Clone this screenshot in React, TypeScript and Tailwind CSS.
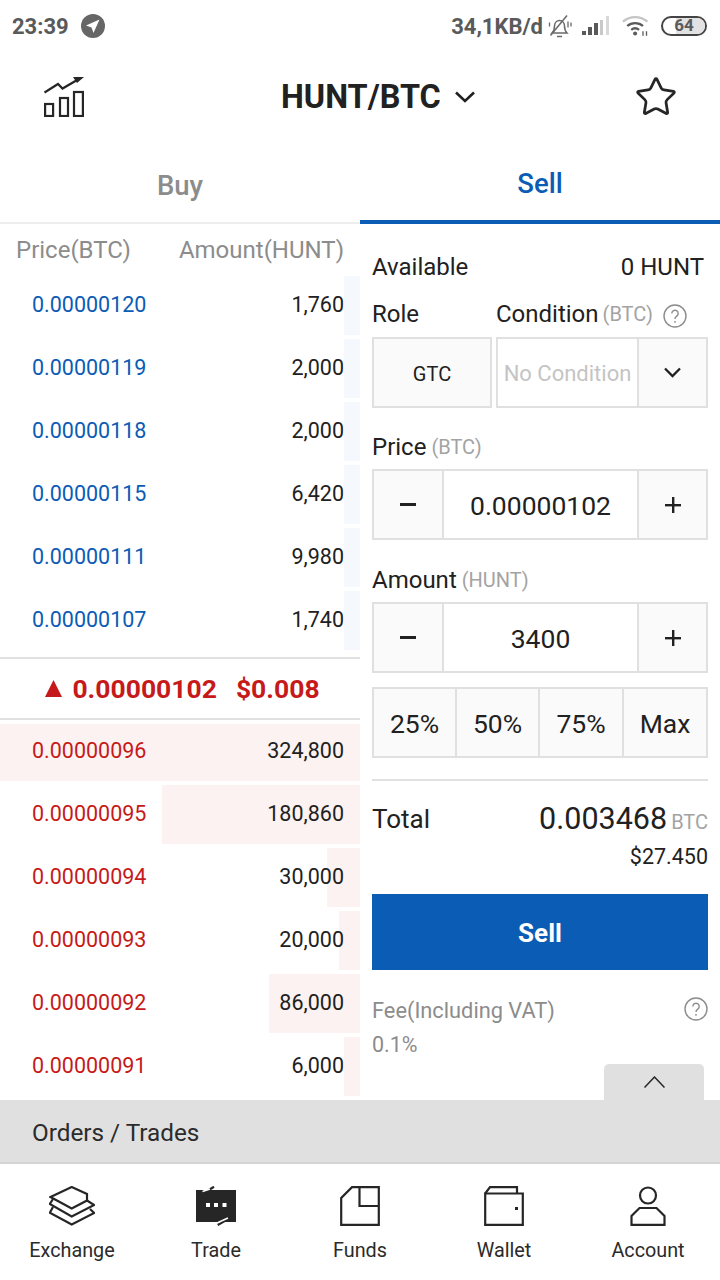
import * as React from "react";
import { Star } from "lucide-react";

const asks = [
  { price: "0.00000120", amount: "1,760", bar: 16 },
  { price: "0.00000119", amount: "2,000", bar: 16 },
  { price: "0.00000118", amount: "2,000", bar: 16 },
  { price: "0.00000115", amount: "6,420", bar: 16 },
  { price: "0.00000111", amount: "9,980", bar: 16 },
  { price: "0.00000107", amount: "1,740", bar: 16 },
];

const bids = [
  { price: "0.00000096", amount: "324,800", bar: 360 },
  { price: "0.00000095", amount: "180,860", bar: 198 },
  { price: "0.00000094", amount: "30,000", bar: 33 },
  { price: "0.00000093", amount: "20,000", bar: 21 },
  { price: "0.00000092", amount: "86,000", bar: 91 },
  { price: "0.00000091", amount: "6,000", bar: 16 },
];

const HelpIcon = () => (
  <svg width="24" height="24" viewBox="0 0 24 24" fill="none" stroke="#8c8c8c" strokeWidth="1.4">
    <circle cx="12" cy="12" r="11" />
    <path d="M8.8 9.4a3.2 3.2 0 1 1 5 2.7c-1.2.8-1.8 1.4-1.8 2.9" />
    <path d="M12 17v1.8" />
  </svg>
);

const BookRow = ({ price, amount, bar, color, tint, first }: { price: string; amount: string; bar: number; color: string; tint: string; first?: boolean }) => (
  <div className={`relative flex h-[59px] items-center justify-between pl-8 pr-4 ${first ? "mt-[2px]" : "mt-1"}`}>
    <div className={`absolute right-0 ${first ? "top-[2px] h-[57px]" : "top-0 h-full"} ${tint}`} style={{ width: bar }} />
    <span className={`relative text-[21.5px] ${color}`}>{price}</span>
    <span className="relative text-[21.5px] text-[#212121]">{amount}</span>
  </div>
);

const Stepper = ({ value }: { value: string }) => (
  <div className="flex h-[71px] border-2 border-[#e0e0e0] text-[26.5px] text-[#212121]">
    <div className="flex w-[68px] items-center justify-center bg-[#fafafa]">
      <div className="h-[2.5px] w-[16px] bg-[#212121]" />
    </div>
    <div className="flex flex-1 items-center justify-center border-x-2 border-[#e0e0e0] pt-[2px]">{value}</div>
    <div className="flex w-[67px] items-center justify-center bg-[#fafafa]">
      <svg width="18" height="18" viewBox="0 0 18 18" fill="#212121">
        <path d="M8 1h2.4v16H8z" />
        <path d="M1 8h16v2.4H1z" />
      </svg>
    </div>
  </div>
);

const NavItem = ({ label, children }: { label: string; children: React.ReactNode }) => (
  <div className="flex w-[144px] flex-col items-center">
    <div className="flex h-[44px] items-center justify-center">{children}</div>
    <span className="mt-[9px] text-[19.8px] leading-[28px] text-[#2b2b2b]">{label}</span>
  </div>
);

export default function App() {
  return (
    <div className="relative flex h-[1280px] w-[720px] flex-col overflow-hidden bg-white font-['Roboto',sans-serif]">
      {/* status bar */}
      <div className="flex h-[52px] items-center justify-between pl-3 pr-[13px] text-[22px] font-bold text-[#5a5a5a]">
        <div className="flex items-center gap-[12px]">
          <span>23:39</span>
          <svg width="24" height="24" viewBox="0 0 24 24">
            <circle cx="12" cy="12" r="12" fill="#666666" />
            <path d="M18.5 5.5 5 11.5l5.5 2 2 5.5z" fill="#ffffff" />
          </svg>
        </div>
        <div className="flex items-center">
          <span>34,1KB/d</span>
          <svg className="ml-[5px]" width="24" height="24" viewBox="0 0 24 24" fill="none" stroke="#6a6a6a" strokeWidth="1.5">
            <path d="M4 19h15c-2-2-2.500-3.500-2.500-7 0-3-2-5.500-5-5.500S6.500 9 6.500 12c0 3.500-.5 5-2.500 7z" />
            <path d="M9 22.500h5" />
            <path d="M2.500 21.500 19 1.500" />
            <path d="M20 7.500v6M23 8.500v4M1.500 8.500v4" strokeWidth="1.300" />
          </svg>
          <svg className="ml-[10px]" width="28" height="20" viewBox="0 0 28 20">
            <rect x="0" y="15" width="4" height="4" fill="#5a5a5a" />
            <rect x="6" y="11" width="4" height="8" fill="#5a5a5a" />
            <rect x="12" y="7" width="4" height="12" fill="#5a5a5a" />
            <rect x="18" y="4" width="3" height="15" fill="#c9c9c9" />
            <rect x="24" y="0" width="3" height="19" fill="#d9d9d9" />
          </svg>
          <svg className="ml-[12px]" width="28" height="22" viewBox="0 0 32 24" fill="none">
            <path d="M1 7c8-7 20-7 28 0" stroke="#c4c4c4" strokeWidth="2.600" />
            <path d="M6 12c5-4.500 13-4.500 18 0" stroke="#5a5a5a" strokeWidth="2.600" />
            <path d="M10.500 16.500c3-2.500 6-2.500 9 0" stroke="#5a5a5a" strokeWidth="2.600" />
            <circle cx="15" cy="20.500" r="2.300" fill="#5a5a5a" />
            <path d="M24 18v5M28 18v5" stroke="#5a5a5a" strokeWidth="1.500" />
          </svg>
          <div className="relative ml-[11px] flex h-[20px] w-[46px] items-center justify-center overflow-hidden rounded-full border-2 border-[#444444] text-[17px] font-bold">
            <div className="absolute inset-y-0 right-0 w-[70%] bg-[#e2e2e2]" />
            <span className="relative">64</span>
          </div>
        </div>
      </div>

      {/* header */}
      <div className="flex h-[90px] items-center pl-[44px] pr-[42px]">
        <svg width="40" height="40" viewBox="0 0 40 40" fill="none" stroke="#262626" strokeWidth="2.200">
          <path d="M0.500 15.500 14 7l4.500 4.500L34 2.500" />
          <path d="M29 0H40L33 6z" fill="#262626" stroke="none" />
          <rect x="1.100" y="27" width="8" height="12" />
          <rect x="16" y="21" width="8" height="18" />
          <rect x="30" y="15" width="8.900" height="24" />
        </svg>
        <span className="ml-[197px] text-[32.4px] font-bold text-[#212121]">HUNT/BTC</span>
        <svg className="ml-[14px]" width="20" height="12" viewBox="0 0 20 12" fill="none" stroke="#212121" strokeWidth="2.600">
          <path d="M1 1.500 10 10l9-8.500" />
        </svg>
        <Star className="ml-auto" size={44} color="#262626" strokeWidth={1.500} />
      </div>

      {/* tabs */}
      <div className="flex h-[82px] text-[27.5px] font-medium">
        <div className="flex w-[360px] items-center justify-center border-b-2 border-[#eeeeee] pt-[8px] text-[#8c8c8c]">Buy</div>
        <div className="flex w-[360px] items-center justify-center border-b-4 border-[#0b5cb5] pt-[6px] text-[#0b5cb5]">Sell</div>
      </div>

      {/* trade area */}
      <div className="flex h-[876px] overflow-hidden">
        <div className="w-[360px]">
          <div className="flex h-[48px] items-center justify-between pl-4 pr-4 pt-[4px] text-[24px] text-[#8c8c8c]">
            <span>Price(BTC)</span>
            <span>Amount(HUNT)</span>
          </div>
          {asks.map((row) => (
            <BookRow key={row.price} {...row} color="text-[#0b5cb5]" tint="bg-[#f5f9fd]" />
          ))}
          <div className="mt-[7px] flex h-[63px] items-center justify-center border-y-2 border-[#e0e0e0] pl-[5px] text-[26.5px] font-bold text-[#c61a1a]">
            <svg width="17" height="17" viewBox="0 0 17 17" fill="#c61a1a">
              <path d="M8.500 0 17 17H0z" />
            </svg>
            <span className="ml-[10px]">0.00000102</span>
            <span className="ml-[19px]">$0.008</span>
          </div>
          {bids.map((row, i) => (
            <BookRow key={row.price} {...row} first={i === 0} color="text-[#c61a1a]" tint="bg-[#fbf2f1]" />
          ))}
        </div>

        <div className="w-[360px] px-3 text-[#212121]">
          <div className="mt-[22px] flex h-[40px] items-center justify-between pr-1 pt-[2px] text-[24px]">
            <span>Available</span>
            <span>0 HUNT</span>
          </div>
          <div className="mt-[7px] flex h-[40px] items-center pt-[2px] text-[24px]">
            <span className="w-[124px]">Role</span>
            <span>Condition</span>
            <span className="ml-[4px] text-[20px] text-[#a3a3a3]">(BTC)</span>
            <div className="ml-[10px] mt-[4px]"><HelpIcon /></div>
          </div>
          <div className="mt-[4px] flex h-[71px] gap-[4px]">
            <div className="flex w-[120px] items-center justify-center border-2 border-[#e0e0e0] bg-[#fafafa] pt-[2px] text-[20px]">GTC</div>
            <div className="flex flex-1 border-2 border-[#e0e0e0]">
              <div className="flex flex-1 items-center justify-center pt-[2px] text-[22px] text-[#c4c4c4]">No Condition</div>
              <div className="flex w-[69px] items-center justify-center border-l-2 border-[#e0e0e0] bg-[#fafafa]">
                <svg width="17" height="11" viewBox="0 0 17 11" fill="none" stroke="#212121" strokeWidth="2.300">
                  <path d="M1 1.500 8.500 9 16 1.500" />
                </svg>
              </div>
            </div>
          </div>
          <div className="mt-[18px] flex h-[40px] items-center pt-[2px] text-[24px]">
            <span>Price</span>
            <span className="ml-[5px] text-[20px] text-[#a3a3a3]">(BTC)</span>
          </div>
          <div className="mt-[3px]"><Stepper value="0.00000102" /></div>
          <div className="mt-[19px] flex h-[40px] items-center pt-[2px] text-[24px]">
            <span>Amount</span>
            <span className="ml-[5px] text-[20px] text-[#a3a3a3]">(HUNT)</span>
          </div>
          <div className="mt-[3px]"><Stepper value="3400" /></div>
          <div className="mt-[14px] flex h-[71px] border-2 border-[#e0e0e0] bg-[#fafafa] pt-0 text-[26.5px]">
            <div className="flex w-[81px] items-center justify-center pt-[2px]">25%</div>
            <div className="flex w-[83px] items-center justify-center border-l-2 border-[#e0e0e0] pt-[2px]">50%</div>
            <div className="flex w-[84px] items-center justify-center border-l-2 border-[#e0e0e0] pt-[2px]">75%</div>
            <div className="flex flex-1 items-center justify-center border-l-2 border-[#e0e0e0] pt-[2px]">Max</div>
          </div>
          <div className="mt-[21px] h-[2px] bg-[#e0e0e0]" />
          <div className="mt-[17px] flex h-[40px] items-center justify-between pt-[2px]">
            <span className="text-[26px]">Total</span>
            <div className="flex items-baseline">
              <span className="text-[30.5px]">0.003468</span>
              <span className="ml-[4px] text-[20px] text-[#a3a3a3]">BTC</span>
            </div>
          </div>
          <div className="flex h-[36px] items-center justify-end pt-[2px] text-[21.5px]">$27.450</div>
          <div className="mt-[20px] flex h-[76px] items-center justify-center bg-[#0b5cb5] pt-[2px] text-[26px] font-bold text-white">Sell</div>
          <div className="mt-[23px] flex h-[34px] items-center justify-between text-[21.8px] text-[#8c8c8c]">
            <span className="pt-[2px]">Fee(Including VAT)</span>
            <div className="mb-[3px]"><HelpIcon /></div>
          </div>
          <div className="flex h-[34px] items-center pt-[2px] text-[21.5px] text-[#8c8c8c]">0.1%</div>
        </div>
      </div>

      {/* orders drawer */}
      <div className="relative flex h-[64px] items-center border-b-2 border-[#d4d4d4] bg-[#e0e0e0] pl-8 pt-[5px] text-[24.3px] text-[#2b2b2b]">
        Orders / Trades
        <div className="absolute right-[16px] top-[-36px] flex h-[36px] w-[100px] items-center justify-center rounded-t-[5px] bg-[#e0e0e0]">
          <svg width="21" height="12" viewBox="0 0 21 12" fill="none" stroke="#262626" strokeWidth="1.500">
            <path d="M0.500 11.500 10.500 1l10 10.500" />
          </svg>
        </div>
      </div>

      {/* bottom nav */}
      <div className="flex flex-1 pt-[20px]">
        <NavItem label="Exchange">
          <svg width="46" height="40" viewBox="0 0 46 40" fill="none" stroke="#262626" strokeWidth="2.200">
            <path d="M22.700 1 38 8v6.500l-15.300 8L1.500 11z" />
            <path d="M4 13 .8 18l21.900 12.500L45.200 19 38 14.500" />
            <path d="M4 21 .8 26.700l21.900 11.800L45.200 27 41 23" />
          </svg>
        </NavItem>
        <NavItem label="Trade">
          <svg width="40" height="40" viewBox="0 0 40 40">
            <path d="M0 4h40v32H0z" fill="#262626" />
            <path d="M8 7 18 .7M21.700 39l10-5.700" stroke="#262626" strokeWidth="2.200" />
            <path d="M6.500 5.500 14 3M22 36.500 32 32" stroke="#ffffff" strokeWidth="1.400" />
            <rect x="10" y="17" width="4" height="4" fill="#ffffff" />
            <rect x="18" y="17" width="4" height="4" fill="#ffffff" />
            <rect x="26.500" y="17" width="4" height="4" fill="#ffffff" />
          </svg>
        </NavItem>
        <NavItem label="Funds">
          <svg width="40" height="40" viewBox="0 0 40 40" fill="none" stroke="#262626" strokeWidth="2.200">
            <path d="M1.200 38.800V12L12 1.200h26.800v37.600z" />
            <path d="M19.500 1.200V20h19.300" />
          </svg>
        </NavItem>
        <NavItem label="Wallet">
          <svg width="40" height="40" viewBox="0 0 40 40" fill="none" stroke="#262626" strokeWidth="2.200">
            <path d="M1.200 7.500V38.800h37.600V7.500z" />
            <path d="M1.200 7.500 6 1.200h27v6.300" />
            <rect x="31" y="21" width="3" height="3" fill="#262626" stroke="none" />
          </svg>
        </NavItem>
        <NavItem label="Account">
          <svg width="36" height="40" viewBox="0 0 36 40" fill="none" stroke="#262626" strokeWidth="2.200">
            <circle cx="18" cy="9.500" r="8" />
            <path d="M1.500 38.800V30l8-8h17l8 8v8.800z" />
          </svg>
        </NavItem>
      </div>
    </div>
  );
}
